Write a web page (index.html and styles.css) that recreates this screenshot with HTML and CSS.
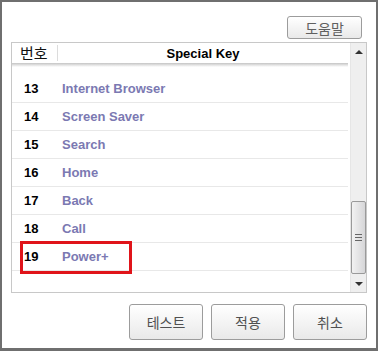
FILE: index.html
```html
<!DOCTYPE html>
<html lang="ko">

<head>
    <meta charset="UTF-8">
    <title>Special Key</title>
    <link rel="stylesheet" href="styles.css">
</head>

<body>
    <div class="frame">
        <div class="top-bar">
            <button class="btn btn-help">도움말</button>
        </div>
        <div class="list-box">
            <div class="list-main">
                <div class="list-head">
                    <div class="col-no">번호</div>
                    <div class="col-key">Special Key</div>
                </div>
                <div class="list-rows">
                    <div class="row"><span class="cell-no">13</span><span class="cell-key">Internet Browser</span></div>
                    <div class="row"><span class="cell-no">14</span><span class="cell-key">Screen Saver</span></div>
                    <div class="row"><span class="cell-no">15</span><span class="cell-key">Search</span></div>
                    <div class="row"><span class="cell-no">16</span><span class="cell-key">Home</span></div>
                    <div class="row"><span class="cell-no">17</span><span class="cell-key">Back</span></div>
                    <div class="row"><span class="cell-no">18</span><span class="cell-key">Call</span></div>
                    <div class="row"><span class="cell-no">19</span><span class="cell-key">Power+</span></div>
                </div>
            </div>
            <div class="scrollbar">
                <div class="sb-btn"><span class="arrow-up"></span></div>
                <div class="sb-track">
                    <div class="sb-thumb">
                        <span class="grip"></span>
                        <span class="grip"></span>
                        <span class="grip"></span>
                    </div>
                </div>
                <div class="sb-btn"><span class="arrow-down"></span></div>
            </div>
            <div class="highlight"></div>
        </div>
        <div class="bottom-bar">
            <button class="btn">테스트</button>
            <button class="btn">적용</button>
            <button class="btn">취소</button>
        </div>
    </div>
</body>

</html>
```

FILE: styles.css
```css
* {
    margin: 0;
    padding: 0;
    box-sizing: border-box;
}

body {
    background: #ffffff;
    font-family: "Liberation Sans", "Noto Sans CJK KR", sans-serif;
}

.frame {
    width: 378px;
    height: 351px;
    border: 2px solid #6f6f6f;
    border-bottom-width: 3px;
    padding: 0 9px 0 9px;
    background: #ffffff;
}

.top-bar {
    display: flex;
    justify-content: flex-end;
    padding: 14px 5px 3px 0;
}

.btn {
    width: 74px;
    height: 36px;
    border: 1px solid #9c9c9c;
    border-radius: 3px;
    background: linear-gradient(#ffffff, #e9e9e9);
    color: #505050;
    font-family: "Noto Sans CJK KR", sans-serif;
    font-size: 14px;
}

.btn-help {
    width: 75px;
    height: 23px;
    color: #606060;
    line-height: 20px;
}

.list-box {
    position: relative;
    display: flex;
    height: 251px;
    border: 1px solid #c8c8c8;
}

.list-main {
    flex: 1;
    padding-right: 2px;
}

.list-head {
    display: flex;
    height: 20px;
    align-items: center;
}

.col-no {
    width: 46px;
    height: 16px;
    padding-left: 8px;
    border-right: 1px solid #dcdcdc;
    font-family: "Noto Sans CJK KR", sans-serif;
    font-size: 15px;
    line-height: 16px;
    color: #111111;
}

.col-key {
    flex: 1;
    text-align: center;
    font-weight: bold;
    font-size: 13px;
    color: #000000;
}

.list-rows {
    padding-top: 12px;
    background: linear-gradient(#c4c4c4, #ffffff 4px) no-repeat;
    background-size: 100% 4px;
}

.row {
    display: flex;
    align-items: center;
    height: 28px;
    border-bottom: 1px solid #e8e8e8;
}

.cell-no {
    width: 46px;
    padding-left: 12px;
    font-weight: bold;
    font-size: 13px;
    color: #000000;
}

.cell-key {
    padding-left: 4px;
    font-weight: bold;
    font-size: 13px;
    color: #7b79b2;
}

.scrollbar {
    display: flex;
    flex-direction: column;
    width: 16px;
    background: #efefef;
    border-left: 1px solid #e6e6e6;
}

.sb-btn {
    display: flex;
    align-items: center;
    justify-content: center;
    height: 17px;
}

.arrow-up {
    border-left: 4px solid transparent;
    border-right: 4px solid transparent;
    border-bottom: 4px solid #333333;
}

.arrow-down {
    border-left: 4px solid transparent;
    border-right: 4px solid transparent;
    border-top: 4px solid #333333;
}

.sb-track {
    flex: 1;
}

.sb-thumb {
    display: flex;
    flex-direction: column;
    justify-content: center;
    align-items: center;
    gap: 2px;
    height: 73px;
    margin-top: 141px;
    border: 1px solid #9a9a9a;
    border-radius: 2px;
    background: linear-gradient(90deg, #f2f2f2, #d6d6d8);
}

.grip {
    width: 7px;
    height: 1px;
    background: #666666;
}

.highlight {
    position: absolute;
    left: 8px;
    top: 198px;
    width: 112px;
    height: 33px;
    border: 3px solid #e0141a;
}

.bottom-bar {
    display: flex;
    justify-content: flex-end;
    gap: 8px;
    padding-top: 11px;
}
```
